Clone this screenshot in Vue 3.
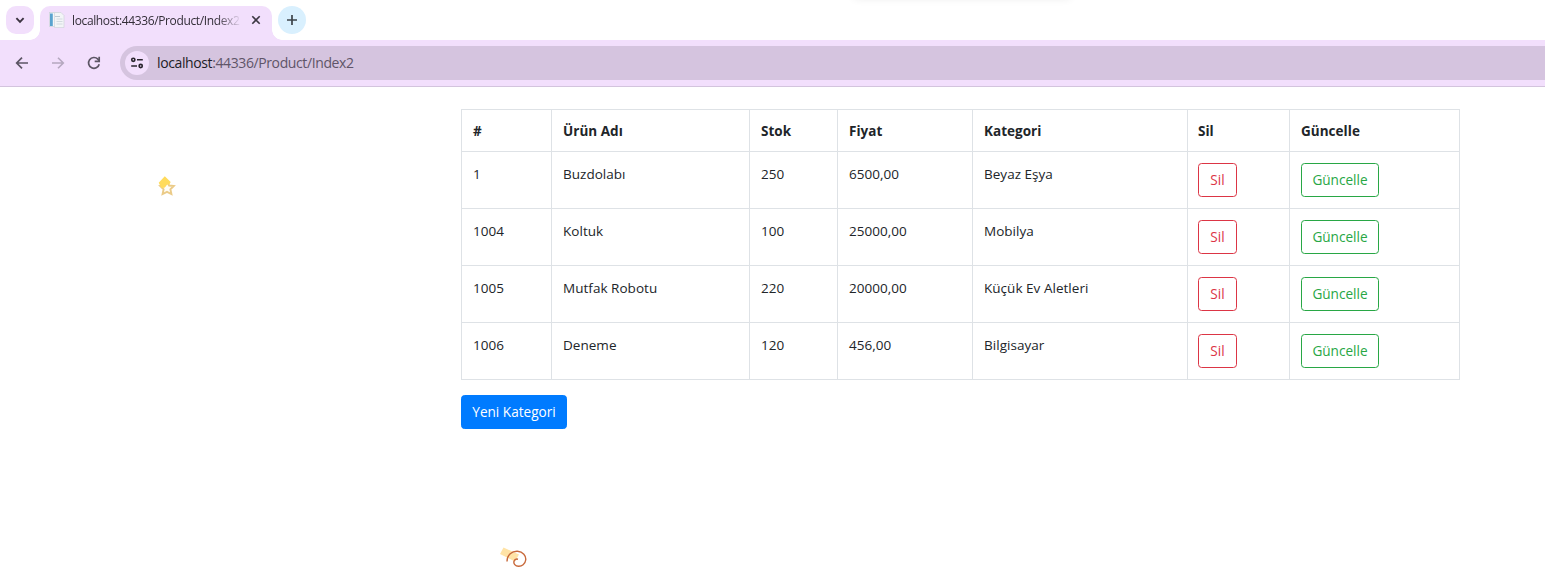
<script setup>
const headers = ['#', 'Ürün Adı', 'Stok', 'Fiyat', 'Kategori', 'Sil', 'Güncelle']
const products = [
  { id: 1, name: 'Buzdolabı', stock: 250, price: '6500,00', category: 'Beyaz Eşya' },
  { id: 1004, name: 'Koltuk', stock: 100, price: '25000,00', category: 'Mobilya' },
  { id: 1005, name: 'Mutfak Robotu', stock: 220, price: '20000,00', category: 'Küçük Ev Aletleri' },
  { id: 1006, name: 'Deneme', stock: 120, price: '456,00', category: 'Bilgisayar' },
]
</script>

<template>
  <div class="window">
    <div class="tabstrip">
      <button class="tab-search" aria-label="Search tabs">
        <svg width="28" height="28" viewBox="0 0 28 28"><path d="M10.400 12.200 14 15.800l3.600-3.600" fill="none" stroke="#3b3340" stroke-width="1.900" /></svg>
      </button>
      <div class="tab">
        <svg class="favicon" width="16" height="16" viewBox="0 0 16 16">
          <rect x="0.500" y="0.500" width="9" height="14" fill="#f4f6f8" stroke="#cfd5dc" stroke-width="0.800" />
          <rect x="1" y="1.500" width="2.800" height="12.500" fill="#5aa3cf" />
          <path d="M5.500.500h6.500L15 3.500V15.500H5.500Z" fill="#f3f5f7" stroke="#d0d4da" stroke-width="0.700" />
          <path d="M7.500 7h6M7.500 9.500h6M7.500 12h6" stroke="#d3dae0" />
          <path d="M6 4.500h5" stroke="#c0cbd4" />
        </svg>
        <span class="tab-title">localhost:44336/Product/Index2</span>
        <svg class="close" width="12" height="12" viewBox="0 0 12 12"><path d="m2.300 2.300 7.400 7.400m0-7.400-7.400 7.400" stroke="#3c3742" stroke-width="1.600" /></svg>
      </div>
      <button class="new-tab" aria-label="New tab">
        <svg width="28" height="28" viewBox="0 0 28 28"><path d="M14 9v10M9 14h10" stroke="#3c4349" stroke-width="1.700" /></svg>
      </button>
      <div class="top-shadow"></div>
    </div>

    <div class="toolbar">
      <svg class="nav" width="16" height="16" viewBox="0 0 16 16"><path d="M14 8H3M8 2.700 2.700 8 8 13.300" fill="none" stroke="#5c5564" stroke-width="1.700" /></svg>
      <svg class="nav" width="16" height="16" viewBox="0 0 16 16"><path d="M2 8h11M8 2.700 13.300 8 8 13.300" fill="none" stroke="#b5a8bf" stroke-width="1.600" /></svg>
      <svg class="nav" width="16" height="16" viewBox="0 0 16 16"><path d="M13.200 9.200A5.400 5.400 0 1 1 11.900 4.200L13.300 5.600" fill="none" stroke="#5c5564" stroke-width="1.700" /><path d="M13.200 1.800v4.500H8.700" fill="none" stroke="#5c5564" stroke-width="1.700" /></svg>
      <div class="omnibox">
        <span class="site-info">
          <svg width="14" height="12" viewBox="0 0 14 12" fill="none" stroke="#29252d" stroke-width="1.600"><circle cx="3.300" cy="2.800" r="1.600" /><path d="M7 2.800h5.800M1.200 9H7" /><circle cx="10.700" cy="9" r="1.600" /></svg>
        </span>
        <span class="url"><b>localhost</b>:44336/Product/Index2</span>
      </div>
    </div>

    <main class="page">
      <table class="products">
        <colgroup><col v-for="n in 7" :key="n" :class="'c' + n" /></colgroup>
        <thead>
          <tr><th v-for="h in headers" :key="h">{{ h }}</th></tr>
        </thead>
        <tbody>
          <tr v-for="p in products" :key="p.id">
            <td>{{ p.id }}</td>
            <td>{{ p.name }}</td>
            <td>{{ p.stock }}</td>
            <td>{{ p.price }}</td>
            <td>{{ p.category }}</td>
            <td><a class="btn danger">Sil</a></td>
            <td><a class="btn success">Güncelle</a></td>
          </tr>
        </tbody>
      </table>
      <a class="btn primary">Yeni Kategori</a>

      <svg class="star" width="20" height="22" viewBox="0 0 20 22">
        <path d="m10 6.500 2.100 4 4.700.5-3.400 3.300 1 4.700-4.400-2.200L5.600 19l1-4.700L3.200 11l4.700-.5Z" fill="#fffdf7" stroke="#ebcb88" stroke-width="1.900" />
        <path d="m7.800 1.300 5.900 5.600-1.400 2.600-2.100.1-2.700 3.200-3 .2-2.800-5.200Z" fill="#ffdb5c" />
      </svg>
      <svg class="swirl" width="30" height="24" viewBox="0 0 30 24">
        <path d="m3.500 1.500 15.500 7-4 7L0 8Z" fill="#ffe3a6" />
        <path d="M7 15.500C7 9 12 5 17.500 5.300c5.500.3 8.700 4.500 8.200 8.700-.5 4.200-4 6.500-7.200 6.300-3.300-.2-5.200-2.700-4.500-5 .6-1.900 2.400-2.500 4-2.100" fill="none" stroke="#c8693b" stroke-width="1.400" />
      </svg>
    </main>
  </div>
</template>

<style>
body { margin: 0; overflow: hidden; background: #fff; }
</style>

<style scoped>
* { box-sizing: border-box; }
.window { width: 1545px; height: 569px; overflow: hidden; font-family: "Open Sans", "Noto Sans", sans-serif; color: #212529; }
svg { display: block; flex: none; }
button { border: 0; padding: 0; }
.tabstrip { height: 40px; display: flex; align-items: flex-start; padding: 6px 0 0 6px; position: relative; }
.tab-search { width: 28px; height: 28px; border-radius: 10px; background: #f2dffc; }
.tab { position: relative; width: 232px; height: 34px; margin-left: 6px; border-radius: 10px 10px 0 0; background: #f2dffc; display: flex; align-items: center; padding: 0 10px 6px 9px; }
.tab::before, .tab::after { content: ""; position: absolute; bottom: 0; width: 10px; height: 10px; }
.tab::before { left: -10px; background: radial-gradient(circle at 0 0, transparent 9.500px, #f2dffc 10px); }
.tab::after { right: -10px; background: radial-gradient(circle at 100% 0, transparent 9.500px, #f2dffc 10px); }
.tab-title { margin-left: 7px; width: 168px; padding-top: 1px; overflow: hidden; white-space: nowrap; font-size: 12px; letter-spacing: -0.370px; line-height: 18px; color: #332e38; -webkit-mask-image: linear-gradient(90deg, #000 86%, transparent 101%); mask-image: linear-gradient(90deg, #000 86%, transparent 101%); }
.close { margin-left: 10px; }
.new-tab { width: 28px; height: 28px; margin-left: 6px; border-radius: 50%; background: #d9f0fe; }
.top-shadow { position: absolute; top: -8px; left: 854px; width: 216px; height: 6px; box-shadow: 0 0 8px rgba(0, 0, 0, 0.1); }
.toolbar { height: 47px; background: #f2dffc; border-bottom: 1px solid #d3c4dd; display: flex; align-items: center; padding-left: 14px; }
.nav { margin-right: 20px; }
.nav:nth-child(3) { margin-right: 18px; }
.omnibox { flex: 1; height: 34px; background: #d5c4df; border-radius: 17px 0 0 17px; display: flex; align-items: center; padding-left: 5px; }
.site-info { width: 24px; height: 24px; border-radius: 50%; background: #f2dffc; display: flex; align-items: center; justify-content: center; }
.url { margin-left: 8px; font-size: 14px; line-height: 20px; letter-spacing: -0.390px; color: #5f5568; white-space: nowrap; }
.url b { font-weight: 400; color: #211d26; }
.page { position: relative; height: 482px; padding: 22px 0 0 461px; font-size: 14px; }
.products { width: 999px; table-layout: fixed; border-spacing: 0; border: solid #dee2e6; border-width: 0 1px 1px 0; }
.c1 { width: 90px; } .c2 { width: 198px; } .c3 { width: 88px; } .c4 { width: 135px; } .c5 { width: 215px; } .c6 { width: 102px; } .c7 { width: 170px; }
th, td { border: solid #dee2e6; border-width: 1px 0 0 1px; text-align: left; padding: 0 0 0 11px; white-space: nowrap; }
th { height: 42px; font-size: 13.500px; font-weight: 700; letter-spacing: 0.030px; padding-top: 1px; }
td { height: 57px; vertical-align: top; padding-top: 11px; line-height: 22px; font-size: 13.500px; letter-spacing: 0.030px; }
td:nth-child(6), th:nth-child(6) { padding-left: 10px; }
.btn { display: flex; align-items: center; justify-content: center; height: 34px; border: 1px solid; border-radius: 3.600px; font-size: 13.600px; line-height: 22px; letter-spacing: 0; }
.danger { width: 39px; color: #dc3545; }
.success { width: 78px; color: #28a745; }
.primary { width: 106px; margin-top: 15px; background: #007bff; border-color: #007bff; color: #fff; }
.star { position: absolute; left: 157px; top: 88px; }
.swirl { position: absolute; left: 500px; top: 459px; }
</style>
